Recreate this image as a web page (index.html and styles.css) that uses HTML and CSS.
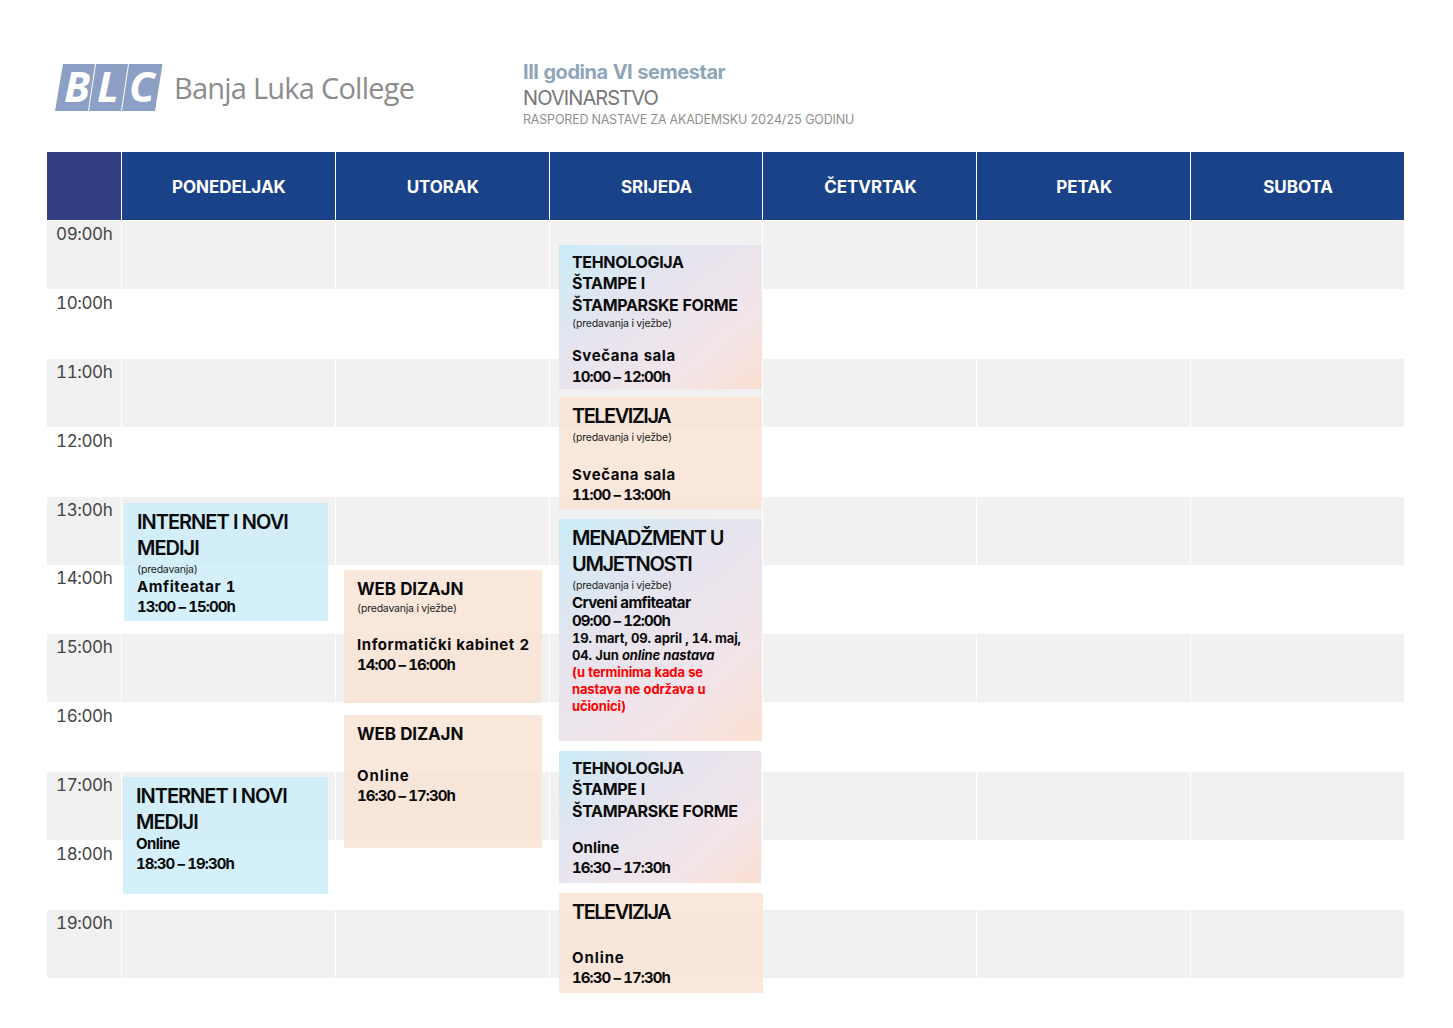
FILE: index.html
```html
<!DOCTYPE html>
<html lang="bs">
<head>
<meta charset="utf-8">
<title>Raspored nastave</title>
<link rel="stylesheet" href="styles.css">
</head>
<body>
<main class="page">
  <header class="top">
    <div class="logo">
      <svg class="logo-mark" width="108" height="47" viewBox="0 0 108 47" aria-hidden="true">
        <polygon points="8,0 40,0 33,47 0,47" fill="#8c9fc4"/>
        <polygon points="41,0 73,0 66,47 34,47" fill="#8c9fc4"/>
        <polygon points="74,0 107.500,0 100,47 67,47" fill="#8c9fc4"/>
        <text x="9" y="38" class="logo-letter">B</text>
        <text x="42" y="38" class="logo-letter">L</text>
        <text x="74" y="38" class="logo-letter">C</text>
      </svg>
      <span class="logo-name">Banja Luka College</span>
    </div>
    <div class="heading">
      <div class="heading-year">III godina VI semestar</div>
      <div class="heading-dept">NOVINARSTVO</div>
      <div class="heading-sub">RASPORED NASTAVE ZA AKADEMSKU 2024/25 GODINU</div>
    </div>
  </header>

  <section class="timetable">
    <div class="grid">
      <div class="hd hd-corner"></div>
      <div class="hd">PONEDELJAK</div>
      <div class="hd">UTORAK</div>
      <div class="hd">SRIJEDA</div>
      <div class="hd">ČETVRTAK</div>
      <div class="hd">PETAK</div>
      <div class="hd">SUBOTA</div>

      <div class="time alt">09:00h</div><div class="alt"></div><div class="alt"></div><div class="alt"></div><div class="alt"></div><div class="alt"></div><div class="alt"></div>
      <div class="time">10:00h</div><div></div><div></div><div></div><div></div><div></div><div></div>
      <div class="time alt">11:00h</div><div class="alt"></div><div class="alt"></div><div class="alt"></div><div class="alt"></div><div class="alt"></div><div class="alt"></div>
      <div class="time">12:00h</div><div></div><div></div><div></div><div></div><div></div><div></div>
      <div class="time alt">13:00h</div><div class="alt"></div><div class="alt"></div><div class="alt"></div><div class="alt"></div><div class="alt"></div><div class="alt"></div>
      <div class="time">14:00h</div><div></div><div></div><div></div><div></div><div></div><div></div>
      <div class="time alt">15:00h</div><div class="alt"></div><div class="alt"></div><div class="alt"></div><div class="alt"></div><div class="alt"></div><div class="alt"></div>
      <div class="time">16:00h</div><div></div><div></div><div></div><div></div><div></div><div></div>
      <div class="time alt">17:00h</div><div class="alt"></div><div class="alt"></div><div class="alt"></div><div class="alt"></div><div class="alt"></div><div class="alt"></div>
      <div class="time">18:00h</div><div></div><div></div><div></div><div></div><div></div><div></div>
      <div class="time alt">19:00h</div><div class="alt"></div><div class="alt"></div><div class="alt"></div><div class="alt"></div><div class="alt"></div><div class="alt"></div>
    </div>

    <article class="ev blue ev-net1">
      <div class="t-lg">INTERNET I NOVI<br>MEDIJI</div>
      <div class="note">(predavanja)</div>
      <div class="place gap-note">Amfiteatar 1</div>
      <div class="hours">13:00 – 15:00h</div>
    </article>
    <article class="ev blue ev-net2">
      <div class="t-lg">INTERNET I NOVI<br>MEDIJI</div>
      <div class="place place-tight">Online</div>
      <div class="hours">18:30 – 19:30h</div>
    </article>

    <article class="ev peach ev-web1">
      <div class="t-web">WEB DIZAJN</div>
      <div class="note note-web">(predavanja i vježbe)</div>
      <div class="place gap-web1">Informatički kabinet 2</div>
      <div class="hours">14:00 – 16:00h</div>
    </article>
    <article class="ev peach ev-web2">
      <div class="t-web">WEB DIZAJN</div>
      <div class="place gap-web2">Online</div>
      <div class="hours">16:30 – 17:30h</div>
    </article>

    <article class="ev mix ev-tech1">
      <div class="t-md">TEHNOLOGIJA<br>ŠTAMPE I<br>ŠTAMPARSKE FORME</div>
      <div class="note note-tech">(predavanja i vježbe)</div>
      <div class="place gap-tech1">Svečana sala</div>
      <div class="hours hours-wide">10:00 – 12:00h</div>
    </article>
    <article class="ev peach ev-tv1">
      <div class="t-lg t-tv">TELEVIZIJA</div>
      <div class="note">(predavanja i vježbe)</div>
      <div class="place gap-tv1">Svečana sala</div>
      <div class="hours">11:00 – 13:00h</div>
    </article>
    <article class="ev mix ev-men">
      <div class="t-lg t-men">MENADŽMENT U<br>UMJETNOSTI</div>
      <div class="note">(predavanja i vježbe)</div>
      <div class="place place-men">Crveni amfiteatar</div>
      <div class="hours hours-men">09:00 – 12:00h</div>
      <div class="dates">19. mart, 09. april , 14. maj,<br>04. Jun <em>online nastava</em></div>
      <div class="dates warn">(u terminima kada se<br>nastava ne održava u<br>učionici)</div>
    </article>
    <article class="ev mix ev-tech2">
      <div class="t-md">TEHNOLOGIJA<br>ŠTAMPE I<br>ŠTAMPARSKE FORME</div>
      <div class="place gap-tech2">Online</div>
      <div class="hours">16:30 – 17:30h</div>
    </article>
    <article class="ev peach ev-tv2">
      <div class="t-lg t-tv">TELEVIZIJA</div>
      <div class="place gap-tv2">Online</div>
      <div class="hours">16:30 – 17:30h</div>
    </article>
  </section>
</main>
</body>
</html>
```
FILE: styles.css
```css
* { box-sizing: border-box; }
html, body { margin: 0; padding: 0; background: #fff; }
body { font-family: Inter, "Liberation Sans", sans-serif; color: #0b0b0b; font-variant-numeric: tabular-nums; }

.page { width: 1453px; height: 1028px; padding: 64px 49px 0 47px; overflow: hidden; }

.top { display: flex; height: 88px; }
.logo { display: flex; align-items: flex-start; width: 476px; padding-left: 8px; }
.logo-mark { display: block; flex: none; overflow: visible; }
.logo-letter { font-family: "Open Sans", sans-serif; font-weight: 700; font-style: italic; font-size: 42px; fill: #fff; }
.logo-name { margin: 4px 0 0 11px; font-family: "Open Sans", sans-serif; font-size: 29px; line-height: 40px; color: #8c8c8c; white-space: nowrap; letter-spacing: -.77px; }

.heading { display: flex; flex-direction: column; }
.heading-year { font-size: 20px; line-height: 18px; font-weight: 700; color: #8ea5ba; margin-top: -1px; letter-spacing: -.45px; }
.heading-dept { font-size: 20px; line-height: 24px; margin-top: 5px; color: #777; letter-spacing: -.9px; }
.heading-sub { font-size: 12.500px; line-height: 18px; margin-top: 1px; color: #8f8f8f; letter-spacing: -.19px; }

.timetable { position: relative; width: 1357px; }
.grid { display: grid; grid-template-columns: 74px repeat(6, 1fr); grid-template-rows: 68.150px; column-gap: 1px; grid-auto-rows: 68px; row-gap: .9px; }
.hd { display: flex; align-items: center; justify-content: center; padding: 2px 0 0 1px; background: #1a4289; color: #fff; font-size: 17px; font-weight: 700; letter-spacing: -.05px; }
.hd-corner { background: #323f82; }
.alt { background: #f1f1f1; }
.time { padding: 3px 0 0 9px; font-size: 17px; line-height: 20px; letter-spacing: -.38px; color: #444; }

.ev { position: absolute; padding: 6px 0 0 13px; white-space: nowrap; }
.blue { background: rgba(203, 237, 250, .85); }
.peach { background: rgba(249, 228, 215, .85); }
.mix { background: linear-gradient(140deg, #c9ecf8 0%, #e6e4ee 38%, #f2e5ea 72%, #fbdfd2 100%); }

.ev-net1 { left: 77px; top: 351px; width: 204px; height: 118px; }
.ev-net2 { left: 76px; top: 625px; width: 205px; height: 117px; }
.ev-web1 { left: 297px; top: 418px; width: 198px; height: 133px; }
.ev-web2 { left: 297px; top: 563px; width: 198px; height: 133px; }
.ev-tech1 { left: 512px; top: 93px; width: 203px; height: 144px; }
.ev-tv1 { left: 512px; top: 245px; width: 203px; height: 112px; }
.ev-men { left: 512px; top: 367px; width: 203px; height: 222px; }
.ev-tech2 { left: 512px; top: 599px; width: 202px; height: 132px; }
.ev-tv2 { left: 512px; top: 741px; width: 204px; height: 100px; }

.t-lg { font-size: 20px; line-height: 26px; font-weight: 600; letter-spacing: -1px; }
.t-tv { letter-spacing: -1.5px; }
.t-men { letter-spacing: -1.3px; }
.t-md { font-size: 16px; line-height: 21.500px; margin-top: .5px; font-weight: 700; letter-spacing: -.33px; }
.t-web { font-size: 17px; line-height: 26px; font-weight: 700; letter-spacing: -.15px; }
.note { margin-top: 1px; font-size: 10.500px; line-height: 15px; letter-spacing: -.2px; color: #222; }
.note-web { margin-top: -1px; }
.note-tech { margin-top: 0; }
.place { font-size: 15px; line-height: 20px; font-weight: 700; letter-spacing: .55px; }
.hours { font-size: 15px; line-height: 20px; font-weight: 700; letter-spacing: -.9px; }
.hours-wide { margin-top: 1px; }
.gap-note { margin-top: 0; }
.place-tight { margin-top: -1px; letter-spacing: -.6px; }
.place-men { line-height: 18px; margin-top: 1px; letter-spacing: -.6px; }
.hours-men { line-height: 18px; }
.gap-web1 { margin-top: 19px; }
.gap-web2 { margin-top: 19px; letter-spacing: .9px; }
.gap-tech1 { margin-top: 15px; }
.gap-tv1 { margin-top: 20px; }
.gap-tech2 { margin-top: 16px; letter-spacing: 0; }
.gap-tv2 { margin-top: 23px; letter-spacing: .9px; }
.dates { font-size: 13px; line-height: 17px; font-weight: 700; letter-spacing: -.14px; }
.warn { color: #f00; }
```
